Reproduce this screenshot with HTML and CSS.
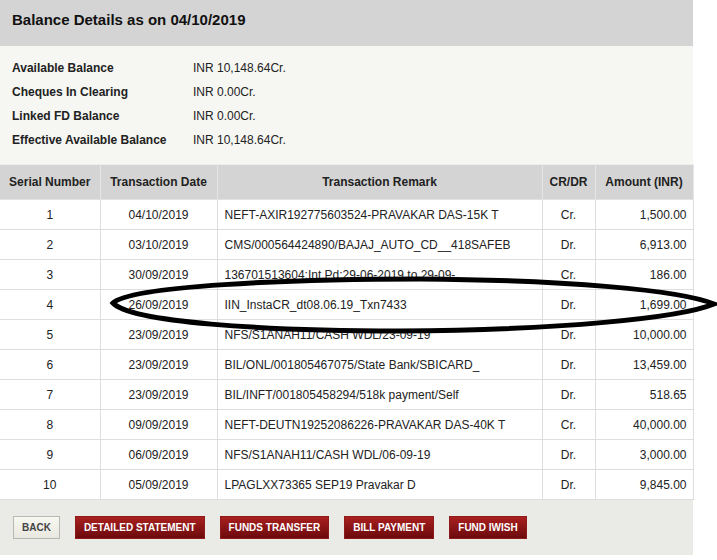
FILE: index.html
```html
<!DOCTYPE html>
<html>
  <head>
    <title>Balance Details</title>
    <link rel="stylesheet" href="styles.css">
  </head>
  <body>
    <div class="panel">
      <div class="panel-head">Balance Details as on 04/10/2019</div>

      <table class="balance">
        <tr><td class="label">Available Balance</td><td>INR 10,148.64Cr.</td></tr>
        <tr><td class="label">Cheques In Clearing</td><td>INR 0.00Cr.</td></tr>
        <tr><td class="label">Linked FD Balance</td><td>INR 0.00Cr.</td></tr>
        <tr><td class="label">Effective Available Balance</td><td>INR 10,148.64Cr.</td></tr>
      </table>

      <table class="txn">
        <colgroup>
          <col class="c-sn">
          <col class="c-date">
          <col class="c-remark">
          <col class="c-crdr">
          <col class="c-amt">
        </colgroup>
        <thead>
          <tr>
            <th>Serial Number</th>
            <th>Transaction Date</th>
            <th>Transaction Remark</th>
            <th>CR/DR</th>
            <th>Amount (INR)</th>
          </tr>
        </thead>
        <tbody>
          <tr><td class="mid">1</td><td class="mid">04/10/2019</td><td>NEFT-AXIR192775603524-PRAVAKAR DAS-15K T</td><td class="mid">Cr.</td><td class="amt">1,500.00</td></tr>
          <tr><td class="mid">2</td><td class="mid">03/10/2019</td><td>CMS/000564424890/BAJAJ_AUTO_CD__418SAFEB</td><td class="mid">Dr.</td><td class="amt">6,913.00</td></tr>
          <tr><td class="mid">3</td><td class="mid">30/09/2019</td><td>136701513604:Int.Pd:29-06-2019 to 29-09-</td><td class="mid">Cr.</td><td class="amt">186.00</td></tr>
          <tr><td class="mid">4</td><td class="mid">26/09/2019</td><td>IIN_InstaCR_dt08.06.19_Txn7433</td><td class="mid">Dr.</td><td class="amt">1,699.00</td></tr>
          <tr><td class="mid">5</td><td class="mid">23/09/2019</td><td>NFS/S1ANAH11/CASH WDL/23-09-19</td><td class="mid">Dr.</td><td class="amt">10,000.00</td></tr>
          <tr><td class="mid">6</td><td class="mid">23/09/2019</td><td>BIL/ONL/001805467075/State Bank/SBICARD_</td><td class="mid">Dr.</td><td class="amt">13,459.00</td></tr>
          <tr><td class="mid">7</td><td class="mid">23/09/2019</td><td>BIL/INFT/001805458294/518k payment/Self</td><td class="mid">Dr.</td><td class="amt">518.65</td></tr>
          <tr><td class="mid">8</td><td class="mid">09/09/2019</td><td>NEFT-DEUTN19252086226-PRAVAKAR DAS-40K T</td><td class="mid">Cr.</td><td class="amt">40,000.00</td></tr>
          <tr><td class="mid">9</td><td class="mid">06/09/2019</td><td>NFS/S1ANAH11/CASH WDL/06-09-19</td><td class="mid">Dr.</td><td class="amt">3,000.00</td></tr>
          <tr><td class="mid">10</td><td class="mid">05/09/2019</td><td>LPAGLXX73365 SEP19 Pravakar D</td><td class="mid">Dr.</td><td class="amt">9,845.00</td></tr>
        </tbody>
      </table>

      <div class="actions">
        <button class="btn-plain">BACK</button>
        <button class="btn-red">DETAILED STATEMENT</button>
        <button class="btn-red">FUNDS TRANSFER</button>
        <button class="btn-red">BILL PAYMENT</button>
        <button class="btn-red">FUND IWISH</button>
      </div>
    </div>

    <!-- hand drawn marker round row 4 -->
    <svg class="marker" width="717" height="560" viewBox="0 0 717 560">
      <path d="M 113 303 C 130 286, 290 279, 420 279 C 565 280, 680 290, 714 304 C 680 318, 560 330, 400 331 C 262 331, 130 322, 113 303 Z"
        fill="none" stroke="#000" stroke-width="5" />
    </svg>
  </body>
</html>
```

FILE: styles.css
```css
body {
  margin: 0;
  background-color: white;
  font-family: "Liberation Sans", Arial, sans-serif;
  color: #222;
}

.panel {
  width: 693px;
}

.panel-head {
  background-color: #d4d4d4;
  height: 46px;
  box-sizing: border-box;
  padding: 11px 12px 0;
  font-size: 15px;
  font-weight: bold;
  color: #111;
}

.balance {
  width: 100%;
  background-color: #f6f6f2;
  border-collapse: collapse;
  font-size: 12px;
}
.balance td {
  height: 24px;
  line-height: 24px;
  padding: 0;
  color: #222;
}
.balance tr:first-child td {
  padding-top: 10px;
}
.balance tr:last-child td {
  padding-bottom: 12px;
}
.balance .label {
  width: 181px;
  padding-left: 12px;
  font-weight: bold;
}

.txn {
  width: 693px;
  border-collapse: collapse;
  table-layout: fixed;
  font-size: 12px;
  background-color: white;
  border-top: 1px solid #eeeeea;
}
.c-sn { width: 100px; }
.c-date { width: 117px; }
.c-remark { width: 325px; }
.c-crdr { width: 53px; }
.c-amt { width: 98px; }

.txn th {
  background-color: #d4d4d4;
  height: 34px;
  padding: 0;
  font-weight: bold;
  color: #222;
  border: 1px solid #e6e6e6;
  border-top: none;
  border-bottom-color: #e2e2e2;
}
.txn th:first-child,
.txn td:first-child {
  border-left: none;
}
.txn td {
  height: 29px;
  padding: 0 7px;
  border: 1px solid #dedede;
  border-top: none;
  color: #222;
  white-space: nowrap;
  overflow: hidden;
}
.txn .mid {
  text-align: center;
  padding: 0;
}
.txn .amt {
  text-align: right;
  padding-right: 6px;
}

.actions {
  background-color: #eaeae6;
  height: 55px;
  box-sizing: border-box;
  padding: 16px 13px 0;
  display: flex;
  gap: 15px;
}
.actions button {
  height: 23px;
  font-family: "Liberation Sans", Arial, sans-serif;
  font-size: 10px;
  font-weight: bold;
  padding: 0 8px;
  cursor: pointer;
}
.btn-plain {
  background: linear-gradient(#f8f8f2, #e8e8e0);
  border: 1px solid #b8b8b0;
  color: #444;
}
.btn-red {
  background: linear-gradient(#a8201f, #6c0a0c);
  border: 1px solid #8e1a1a;
  color: white;
}

.marker {
  position: absolute;
  top: 0;
  left: 0;
  pointer-events: none;
}
```
